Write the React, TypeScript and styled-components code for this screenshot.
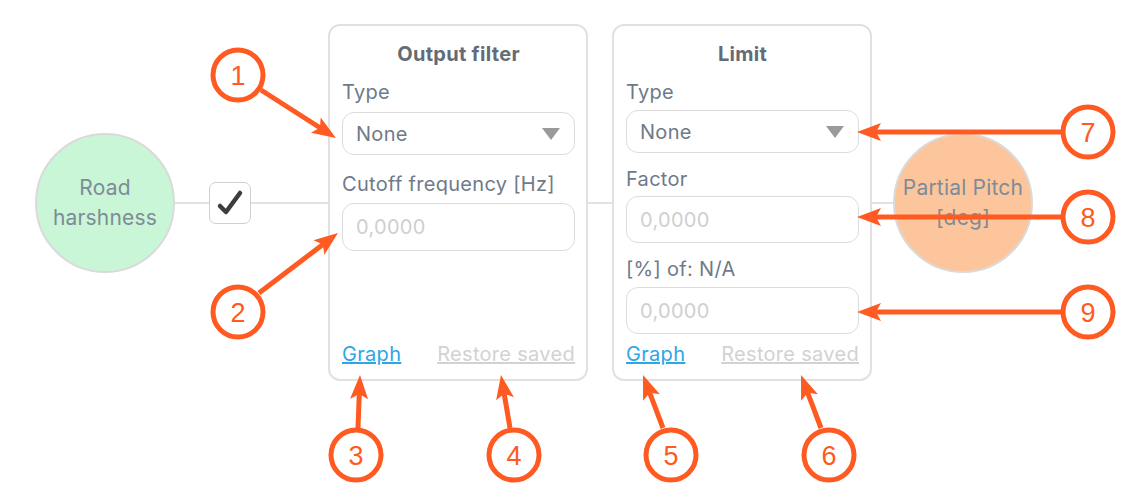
import styled, { createGlobalStyle } from 'styled-components';

const ORANGE = '#ff5a21';

const GlobalStyle = createGlobalStyle`
  html, body {
    margin: 0;
    padding: 0;
    background: #fff;
  }
  body {
    font-family: Inter, 'Noto Sans', sans-serif;
  }
`;

type Callout = { n: number; cx: number; cy: number; from: [number, number]; to: [number, number] };

const CALLOUTS: Callout[] = [
  { n: 1, cx: 238, cy: 75, from: [261, 90], to: [336, 138] },
  { n: 2, cx: 238, cy: 312, from: [259, 293], to: [338, 233] },
  { n: 3, cx: 356, cy: 455, from: [358, 428], to: [360, 375] },
  { n: 4, cx: 514, cy: 455, from: [510, 428], to: [501, 375] },
  { n: 5, cx: 671, cy: 455, from: [663, 428], to: [643, 375] },
  { n: 6, cx: 829, cy: 455, from: [821, 428], to: [801, 375] },
  { n: 7, cx: 1088, cy: 132, from: [1062, 132], to: [857, 132] },
  { n: 8, cx: 1088, cy: 217, from: [1062, 217], to: [857, 217] },
  { n: 9, cx: 1088, cy: 312, from: [1062, 312], to: [857, 312] },
];

const Arrow = ({ from, to }: { from: [number, number]; to: [number, number] }) => {
  const [x1, y1] = from;
  const [x2, y2] = to;
  const len = Math.hypot(x2 - x1, y2 - y1);
  const ux = (x2 - x1) / len;
  const uy = (y2 - y1) / len;
  const px = -uy;
  const py = ux;
  const HEAD = 24;
  const HALF = 9;
  const bx = x2 - ux * HEAD;
  const by = y2 - uy * HEAD;
  const nx = x2 - ux * (HEAD - 5);
  const ny = y2 - uy * (HEAD - 5);
  const pts = [
    [x2, y2],
    [bx + px * HALF, by + py * HALF],
    [nx, ny],
    [bx - px * HALF, by - py * HALF],
  ]
    .map((p) => p.join(','))
    .join(' ');
  return (
    <g>
      <line x1={x1} y1={y1} x2={nx} y2={ny} stroke={ORANGE} strokeWidth={5} />
      <polygon points={pts} fill={ORANGE} />
    </g>
  );
};

const Callouts = () => (
  <Overlay width={1132} height={497} viewBox="0 0 1132 497">
    {CALLOUTS.map((c) => (
      <g key={c.n}>
        <Arrow from={c.from} to={c.to} />
        <circle cx={c.cx} cy={c.cy} r={25} fill="#fff" stroke={ORANGE} strokeWidth={5} />
        <CalloutNumber x={c.cx} y={c.cy + 10}>
          {c.n}
        </CalloutNumber>
      </g>
    ))}
  </Overlay>
);

const Field = ({ label, children, $gap }: { label: string; children: React.ReactNode; $gap: number }) => (
  <FieldWrapper $gap={$gap}>
    <Label>{label}</Label>
    {children}
  </FieldWrapper>
);

const TypeSelect = () => (
  <SelectBox>
    <span>None</span>
    <Caret />
  </SelectBox>
);

const PanelFooter = () => (
  <Footer>
    <GraphLink href="#">Graph</GraphLink>
    <RestoreLink>Restore saved</RestoreLink>
  </Footer>
);

const App = () => {
  return (
    <>
      <GlobalStyle />
      <Canvas>
        <NodeRow>
          <Node $fill="#c9f6d6">
            Road
            <br />
            harshness
          </Node>
          <Wire $width={34} />
          <Toggle>
            <svg width="42" height="42" viewBox="0 0 42 42">
              <path
                d="M11 24 L17 30 L31 11"
                fill="none"
                stroke="#3c3c3c"
                strokeWidth={4.5}
                strokeLinecap="round"
                strokeLinejoin="round"
              />
            </svg>
          </Toggle>
          <Wire $width={77} />
          <Panel>
            <PanelTitle>Output filter</PanelTitle>
            <Fields $gap={19}>
              <Field label="Type" $gap={10}>
                <TypeSelect />
              </Field>
              <Field label="Cutoff frequency [Hz]" $gap={9}>
                <NumberInput $height={48} placeholder="0,0000" />
              </Field>
            </Fields>
            <PanelFooter />
          </Panel>
          <Wire $width={24} />
          <Panel>
            <PanelTitle>Limit</PanelTitle>
            <Fields $gap={16}>
              <Field label="Type" $gap={8}>
                <TypeSelect />
              </Field>
              <Field label="Factor" $gap={7}>
                <NumberInput $height={47} placeholder="0,0000" />
              </Field>
              <Field label="[%] of: N/A" $gap={8}>
                <NumberInput $height={47} placeholder="0,0000" />
              </Field>
            </Fields>
            <PanelFooter />
          </Panel>
          <Wire $width={21} />
          <Node $fill="#fdc59b">
            Partial Pitch
            <br />
            [deg]
          </Node>
        </NodeRow>
        <Callouts />
      </Canvas>
    </>
  );
};

const Canvas = styled.div`
  position: relative;
  width: 1132px;
  height: 497px;
  overflow: hidden;
  background: #fff;
`;

const NodeRow = styled.div`
  display: flex;
  align-items: center;
  padding: 24px 0 0 35px;
`;

const Node = styled.div<{ $fill: string }>`
  box-sizing: border-box;
  flex: none;
  width: 140px;
  height: 140px;
  border-radius: 50%;
  border: 2px solid #dadada;
  background: ${(p) => p.$fill};
  display: flex;
  align-items: center;
  justify-content: center;
  text-align: center;
  font-size: 21px;
  letter-spacing: 0.2px;
  line-height: 30px;
  color: #7e8b98;
  white-space: nowrap;
`;

const Wire = styled.div<{ $width: number }>`
  flex: none;
  width: ${(p) => p.$width}px;
  height: 2px;
  background: #e2e2e2;
`;

const Toggle = styled.div`
  box-sizing: border-box;
  flex: none;
  width: 42px;
  height: 42px;
  border: 1.5px solid #cfcfcf;
  border-radius: 7px;
  background: #fff;
  display: flex;
  align-items: center;
  justify-content: center;
  svg {
    display: block;
    margin: -1.5px;
  }
`;

const Panel = styled.section`
  box-sizing: border-box;
  flex: none;
  width: 260px;
  height: 357px;
  display: flex;
  flex-direction: column;
  padding: 18px 11px 15px 12px;
  border: 2px solid #e1e1e1;
  border-radius: 12px;
  background: #fff;
  font-size: 20px;
  letter-spacing: 0.3px;
`;

const PanelTitle = styled.div`
  font-weight: 700;
  line-height: 20px;
  text-align: center;
  color: #646b76;
  margin-bottom: 18px;
`;

const Fields = styled.div<{ $gap: number }>`
  display: flex;
  flex-direction: column;
  gap: ${(p) => p.$gap}px;
`;

const FieldWrapper = styled.div<{ $gap: number }>`
  display: flex;
  flex-direction: column;
  gap: ${(p) => p.$gap}px;
`;

const Label = styled.div`
  line-height: 20px;
  color: #6f7a88;
  white-space: nowrap;
`;

const SelectBox = styled.div`
  box-sizing: border-box;
  height: 43px;
  display: flex;
  align-items: center;
  justify-content: space-between;
  padding: 0 14px 0 13px;
  border: 1.5px solid #dcdcdc;
  border-radius: 12px;
  color: #6f7a88;
`;

const Caret = styled.span`
  width: 0;
  height: 0;
  border-left: 9px solid transparent;
  border-right: 9px solid transparent;
  border-top: 12px solid #9a9a9a;
`;

const NumberInput = styled.input<{ $height: number }>`
  box-sizing: border-box;
  width: 100%;
  height: ${(p) => p.$height}px;
  padding: 0 13px;
  border: 1.5px solid #dcdcdc;
  border-radius: 12px;
  background: #fff;
  font-family: Inter, 'Noto Sans', sans-serif;
  font-size: 20px;
  letter-spacing: 0.3px;
  color: #6f7a88;
  outline: none;
  &::placeholder {
    color: #cfcfcf;
  }
`;

const Footer = styled.div`
  margin-top: auto;
  display: flex;
  justify-content: space-between;
  line-height: 20px;
`;

const GraphLink = styled.a`
  color: #2ca6e6;
  text-decoration: underline;
`;

const RestoreLink = styled.span`
  color: #d2d2d2;
  text-decoration: underline;
`;

const Overlay = styled.svg`
  position: absolute;
  inset: 0;
  pointer-events: none;
`;

const CalloutNumber = styled.text`
  font-family: 'Liberation Sans', Arial, sans-serif;
  font-size: 27px;
  fill: ${ORANGE};
  text-anchor: middle;
`;

export default App;
